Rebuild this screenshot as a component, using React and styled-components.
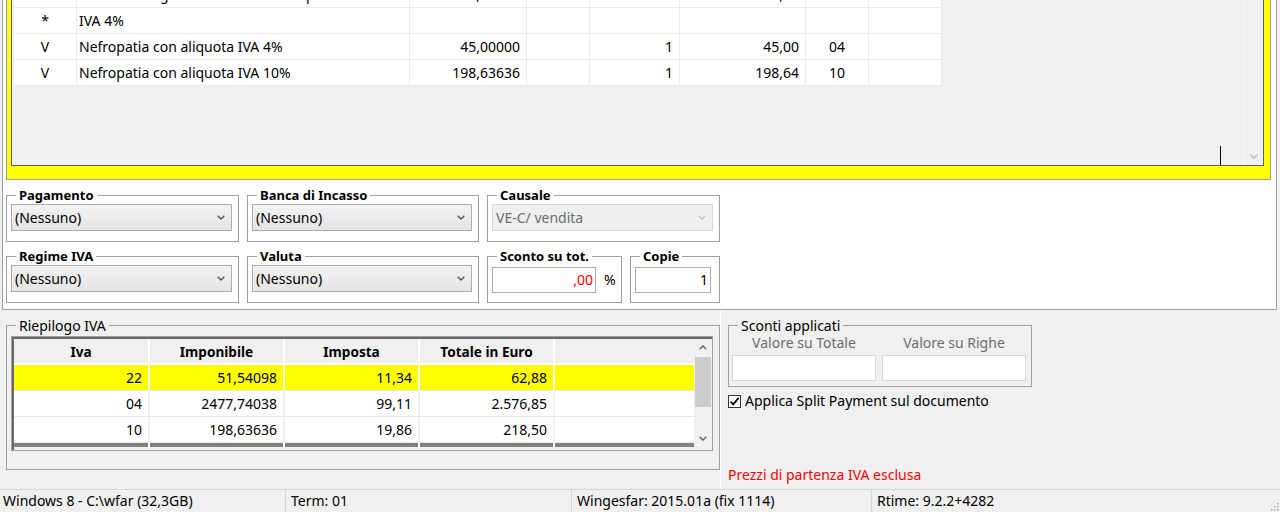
import React from 'react';
import styled, { createGlobalStyle } from 'styled-components';

const Global = createGlobalStyle`
  html, body { margin: 0; padding: 0; background: #f0f0f0; }
  body {
    font-family: "Noto Sans", "Open Sans", sans-serif;
    font-size: 14px;
    color: #000;
    overflow: hidden;
  }
  * { box-sizing: border-box; }
`;

const Page = styled.div`
  width: 1280px;
  height: 512px;
  overflow: hidden;
  display: flex;
  flex-direction: column;
  background: #f0f0f0;
`;

/* ---------- top white panel ---------- */
const TopPanel = styled.div`
  flex: none;
  margin-left: 2px;
  width: 1275px;
  height: 310px;
  background: #fff;
  border: 1px solid #a0a0a0;
  border-top: none;
  padding: 0 5px 0 3px;
  display: flex;
  flex-direction: column;
`;

const YellowFrame = styled.div`
  flex: none;
  margin-top: -26px;
  height: 206px;
  background: #ffff00;
  border: 1px solid #a0a0a0;
  padding: 4px 6px 13px 4px;
  display: flex;
`;

const GridBox = styled.div`
  flex: 1;
  position: relative;
  display: flex;
  align-items: stretch;
  border: 1px solid #5f5f5f;
  background: #f0f0f0;
  padding: 2px 0 0 2px;
`;

const DataGrid = styled.div`
  align-self: flex-start;
  display: grid;
  grid-template-columns: 63px 333px 117px 63px 90px 126px 63px 73px;
  background: #fff;
`;

const Cell = styled.div`
  height: 26px;
  border-right: 1px solid #ebebeb;
  border-bottom: 1px solid #ebebeb;
  display: flex;
  align-items: center;
  justify-content: ${p => (p.$align === 'right' ? 'flex-end' : p.$align === 'center' ? 'center' : 'flex-start')};
  padding: ${p => (p.$align === 'left' ? '0 2px' : '0 6px')};
  white-space: nowrap;
  overflow: hidden;
  line-height: 18px;
`;

const VScroll = styled.div`
  margin-left: auto;
  width: 19px;
  border-left: 1px solid #fafafa;
  display: flex;
  flex-direction: column;
  justify-content: flex-end;
  align-items: center;
`;

const ArrowBox = styled.div`
  height: 17px;
  width: 100%;
  display: flex;
  align-items: center;
  justify-content: center;
  flex: none;
`;

const Caret = styled.div`
  position: absolute;
  left: 1208px;
  bottom: 0;
  width: 1px;
  height: 19px;
  background: #000;
`;

/* ---------- fields ---------- */
const Fields = styled.div`
  flex: none;
  padding-top: 7px;
  display: flex;
  flex-direction: column;
  gap: 6px;
`;

const FieldRow = styled.div`
  display: flex;
  gap: 8px;
`;

const Group = styled.fieldset`
  margin: 0;
  min-width: 0;
  width: ${p => p.$w}px;
  height: ${p => p.$h || 55}px;
  border: 1px solid #a0a0a0;
  padding: 0 4px;
  flex: none;
`;

const Legend = styled.legend`
  margin-left: 5px;
  padding: 0 3px;
  line-height: 17px;
  font-size: ${p => (p.$bold ? 13 : 14)}px;
  font-weight: ${p => (p.$bold ? 700 : 400)};
`;

const GroupBody = styled.div`
  display: flex;
  align-items: center;
  gap: ${p => p.$gap || 0}px;
  margin-top: ${p => p.$mt || 0}px;
`;

const Combo = styled.div`
  width: ${p => p.$w || 221}px;
  height: 27px;
  border: 1px solid ${p => (p.$disabled ? '#d9d9d9' : '#acacac')};
  background: ${p => (p.$disabled ? '#efefef' : 'linear-gradient(#f2f2f2, #e5e5e5)')};
  color: ${p => (p.$disabled ? '#6d6d6d' : '#000')};
  display: flex;
  align-items: center;
  justify-content: space-between;
  padding: 0 6px 0 3px;
  line-height: 18px;
`;

const TextBox = styled.div`
  width: ${p => p.$w}px;
  height: ${p => p.$h || 26}px;
  border: 1px solid ${p => p.$border || '#acacac'};
  background: #fff;
  display: flex;
  align-items: center;
  justify-content: flex-end;
  padding-right: 2px;
  color: ${p => p.$color || '#000'};
  line-height: 18px;
`;

const Unit = styled.span`
  line-height: 18px;
`;

/* ---------- bottom area ---------- */
const BottomArea = styled.div`
  flex: none;
  height: 179px;
  display: flex;
  padding-left: 6px;
`;

const LeftPane = styled.div`
  padding-top: 7px;
`;

const SumGrid = styled.div`
  margin-top: 2px;
  width: 702px;
  height: 115px;
  border: 1px solid #a0a0a0;
  background: #f0f0f0;
`;

const SumInner = styled.div`
  height: 100%;
  border-left: 2px solid #696969;
  border-top: 2px solid #696969;
  padding: 0 1px 3px 0;
  display: flex;
`;

const SumTable = styled.div`
  width: 680px;
  display: grid;
  grid-template-columns: 136px 135px 135px 135px 139px;
  grid-template-rows: 26px 26px 26px 26px 4px;
`;

const HeadCell = styled.div`
  background: #f0f0f0;
  border-right: ${p => (p.$last ? 'none' : '2px solid #fff')};
  border-bottom: 2px solid #fff;
  display: flex;
  align-items: center;
  justify-content: center;
  font-weight: 700;
  font-size: 13.6px;
  line-height: 17px;
`;

const SumCell = styled.div`
  background: ${p => (p.$hl ? '#ffff00' : '#fff')};
  border-right: ${p => (p.$last ? 'none' : `2px solid ${p.$hl ? '#fff' : '#f0f0f0'}`)};
  border-bottom: 1px solid #e8e8e8;
  display: flex;
  align-items: center;
  justify-content: flex-end;
  padding-right: 6px;
  line-height: 18px;
`;

const FootCell = styled.div`
  background: #808080;
  border-right: ${p => (p.$last ? 'none' : '2px solid #fff')};
`;

const SumScroll = styled.div`
  width: 17px;
  display: flex;
  flex-direction: column;
  background: #f0f0f0;
`;

const Track = styled.div`
  flex: 1;
  padding: 1px 0 0 1px;
`;

const Thumb = styled.div`
  width: 16px;
  height: 50px;
  background: #cdcdcd;
`;

const RightPane = styled.div`
  border-left: 1px solid #ffffff;
  padding: 7px 0 6px 7px;
  width: 320px;
  display: flex;
  flex-direction: column;
`;

const ScontiBody = styled.div`
  display: flex;
  gap: 6px;
  margin-left: -1px;
`;

const ScontiCol = styled.div`
  width: 144px;
  display: flex;
  flex-direction: column;
  align-items: center;
  gap: 3px;
`;

const GrayLabel = styled.div`
  color: #6d6d6d;
  line-height: 18px;
`;

const CheckRow = styled.div`
  margin-top: 7px;
  display: flex;
  align-items: center;
  gap: 4px;
  height: 14px;
  line-height: 14px;
`;

const CheckBox = styled.div`
  width: 13px;
  height: 13px;
  border: 1px solid #333;
  background: #fff;
  display: flex;
  align-items: center;
  justify-content: center;
`;

const RedNote = styled.div`
  margin-top: auto;
  color: #ff0000;
  line-height: 17px;
`;

/* ---------- status bar ---------- */
const StatusBar = styled.div`
  flex: none;
  height: 23px;
  border-top: 1px solid #d7d7d7;
  display: flex;
  position: relative;
`;

const StatusCell = styled.div`
  width: ${p => p.$w}px;
  flex: ${p => (p.$grow ? 1 : 'none')};
  border-left: ${p => (p.$first ? 'none' : '1px solid #d7d7d7')};
  padding-left: ${p => (p.$first ? 3 : 5)}px;
  display: flex;
  align-items: center;
  white-space: nowrap;
  line-height: 18px;
`;

const Grip = styled.svg`
  position: absolute;
  right: 1px;
  bottom: 1px;
`;

const Chevron = ({ up, color = '#555' }) => (
  <svg width="8" height="5" viewBox="0 0 8 5">
    <polyline
      points={up ? '0.7,4.3 4,1 7.3,4.3' : '0.7,0.7 4,4 7.3,0.7'}
      fill="none"
      stroke={color}
      strokeWidth="1.4"
    />
  </svg>
);

const cols = ['center', 'left', 'right', 'right', 'right', 'right', 'center', 'right'];

const topRows = [
  ['', 'Sconti del regime IVA ridotto nefropatia', '51,54098', '', '1', '51,54', '22', ''],
  ['*', 'IVA 4%', '', '', '', '', '', ''],
  ['V', 'Nefropatia con aliquota IVA 4%', '45,00000', '', '1', '45,00', '04', ''],
  ['V', 'Nefropatia con aliquota IVA 10%', '198,63636', '', '1', '198,64', '10', ''],
];

const sumRows = [
  { hl: true, v: ['22', '51,54098', '11,34', '62,88', ''] },
  { hl: false, v: ['04', '2477,74038', '99,11', '2.576,85', ''] },
  { hl: false, v: ['10', '198,63636', '19,86', '218,50', ''] },
];

export default function App() {
  return (
    <Page>
      <Global />
      <TopPanel>
        <YellowFrame>
          <GridBox>
            <DataGrid>
              {topRows.map((r, i) =>
                r.map((v, j) => (
                  <Cell key={`${i}-${j}`} $align={cols[j]}>
                    {v}
                  </Cell>
                ))
              )}
            </DataGrid>
            <VScroll>
              <ArrowBox>
                <Chevron color="#bfbfbf" />
              </ArrowBox>
            </VScroll>
            <Caret />
          </GridBox>
        </YellowFrame>

        <Fields>
          <FieldRow>
            <Group $w={233}>
              <Legend $bold>Pagamento</Legend>
              <GroupBody>
                <Combo>
                  <span>(Nessuno)</span>
                  <Chevron />
                </Combo>
              </GroupBody>
            </Group>
            <Group $w={232}>
              <Legend $bold>Banca di Incasso</Legend>
              <GroupBody>
                <Combo $w={220}>
                  <span>(Nessuno)</span>
                  <Chevron />
                </Combo>
              </GroupBody>
            </Group>
            <Group $w={233}>
              <Legend $bold>Causale</Legend>
              <GroupBody>
                <Combo $disabled>
                  <span>VE-C/ vendita</span>
                  <Chevron color="#c4c4c4" />
                </Combo>
              </GroupBody>
            </Group>
          </FieldRow>
          <FieldRow>
            <Group $w={233}>
              <Legend $bold>Regime IVA</Legend>
              <GroupBody>
                <Combo>
                  <span>(Nessuno)</span>
                  <Chevron />
                </Combo>
              </GroupBody>
            </Group>
            <Group $w={232}>
              <Legend $bold>Valuta</Legend>
              <GroupBody>
                <Combo $w={220}>
                  <span>(Nessuno)</span>
                  <Chevron />
                </Combo>
              </GroupBody>
            </Group>
            <Group $w={135}>
              <Legend $bold>Sconto su tot.</Legend>
              <GroupBody $mt={2} $gap={8}>
                <TextBox $w={104} $color="#ff0000">,00</TextBox>
                <Unit>%</Unit>
              </GroupBody>
            </Group>
            <Group $w={90}>
              <Legend $bold>Copie</Legend>
              <GroupBody $mt={2}>
                <TextBox $w={76}>1</TextBox>
              </GroupBody>
            </Group>
          </FieldRow>
        </Fields>
      </TopPanel>

      <BottomArea>
        <LeftPane>
          <Group $w={714} $h={153}>
            <Legend>Riepilogo IVA</Legend>
            <SumGrid>
              <SumInner>
                <SumTable>
                  {['Iva', 'Imponibile', 'Imposta', 'Totale in Euro', ''].map((h, j) => (
                    <HeadCell key={j} $last={j === 4}>{h}</HeadCell>
                  ))}
                  {sumRows.map((r, i) =>
                    r.v.map((v, j) => (
                      <SumCell key={`${i}-${j}`} $hl={r.hl} $last={j === 4}>{v}</SumCell>
                    ))
                  )}
                  {[0, 1, 2, 3, 4].map(j => (
                    <FootCell key={j} $last={j === 4} />
                  ))}
                </SumTable>
                <SumScroll>
                  <ArrowBox>
                    <Chevron up color="#606060" />
                  </ArrowBox>
                  <Track>
                    <Thumb />
                  </Track>
                  <ArrowBox>
                    <Chevron color="#606060" />
                  </ArrowBox>
                </SumScroll>
              </SumInner>
            </SumGrid>
          </Group>
        </LeftPane>

        <RightPane>
          <Group $w={304} $h={70}>
            <Legend>Sconti applicati</Legend>
            <ScontiBody>
              <ScontiCol>
                <GrayLabel>Valore su Totale</GrayLabel>
                <TextBox $w={144} $border="#d9d9d9" />
              </ScontiCol>
              <ScontiCol>
                <GrayLabel>Valore su Righe</GrayLabel>
                <TextBox $w={144} $border="#d9d9d9" />
              </ScontiCol>
            </ScontiBody>
          </Group>
          <CheckRow>
            <CheckBox>
              <svg width="11" height="11" viewBox="0 0 11 11">
                <path d="M1.5 5.5 L4.2 8.3 L9.6 1.8" fill="none" stroke="#000" strokeWidth="1.8" />
              </svg>
            </CheckBox>
            <span>Applica Split Payment sul documento</span>
          </CheckRow>
          <RedNote>Prezzi di partenza IVA esclusa</RedNote>
        </RightPane>
      </BottomArea>

      <StatusBar>
        <StatusCell $first $w={285}>Windows 8 - C:\wfar (32,3GB)</StatusCell>
        <StatusCell $w={286}>Term: 01</StatusCell>
        <StatusCell $w={300}>Wingesfar: 2015.01a (fix 1114)</StatusCell>
        <StatusCell $grow>Rtime: 9.2.2+4282</StatusCell>
        <Grip width="10" height="10" viewBox="0 0 10 10">
          {[[8, 2], [8, 5], [5, 5], [8, 8], [5, 8], [2, 8]].map(([x, y], k) => (
            <rect key={k} x={x} y={y} width="1.5" height="1.5" fill="#a0a0a0" />
          ))}
        </Grip>
      </StatusBar>
    </Page>
  );
}
